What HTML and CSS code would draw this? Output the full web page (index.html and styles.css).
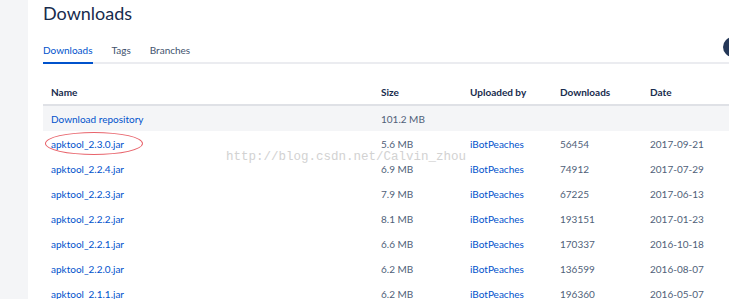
FILE: index.html
```html
<!DOCTYPE html>
<html lang="en">
<head>
	<meta charset="UTF-8">
	<title>Downloads</title>
	<link rel="stylesheet" href="styles.css">
</head>
<body>
	<div id="page">
		<div class="sidebar"></div>
		<div class="main">
			<h1>Downloads</h1>
			<ul class="tabs">
				<li class="active">Downloads</li>
				<li>Tags</li>
				<li>Branches</li>
			</ul>
			<table class="files">
				<colgroup>
					<col class="c-name">
					<col class="c-size">
					<col class="c-user">
					<col class="c-count">
					<col class="c-date">
				</colgroup>
				<thead>
					<tr>
						<th>Name</th>
						<th>Size</th>
						<th>Uploaded by</th>
						<th>Downloads</th>
						<th>Date</th>
					</tr>
				</thead>
				<tbody>
					<tr class="repo">
						<td><a href="#">Download repository</a></td>
						<td>101.2 MB</td>
						<td></td>
						<td></td>
						<td></td>
					</tr>
					<tr>
						<td><a href="#" class="marked">apktool_2.3.0.jar</a></td>
						<td>5.6 MB</td>
						<td><a href="#">iBotPeaches</a></td>
						<td>56454</td>
						<td>2017-09-21</td>
					</tr>
					<tr>
						<td><a href="#">apktool_2.2.4.jar</a></td>
						<td>6.9 MB</td>
						<td><a href="#">iBotPeaches</a></td>
						<td>74912</td>
						<td>2017-07-29</td>
					</tr>
					<tr>
						<td><a href="#">apktool_2.2.3.jar</a></td>
						<td>7.9 MB</td>
						<td><a href="#">iBotPeaches</a></td>
						<td>67225</td>
						<td>2017-06-13</td>
					</tr>
					<tr>
						<td><a href="#">apktool_2.2.2.jar</a></td>
						<td>8.1 MB</td>
						<td><a href="#">iBotPeaches</a></td>
						<td>193151</td>
						<td>2017-01-23</td>
					</tr>
					<tr>
						<td><a href="#">apktool_2.2.1.jar</a></td>
						<td>6.6 MB</td>
						<td><a href="#">iBotPeaches</a></td>
						<td>170337</td>
						<td>2016-10-18</td>
					</tr>
					<tr>
						<td><a href="#">apktool_2.2.0.jar</a></td>
						<td>6.2 MB</td>
						<td><a href="#">iBotPeaches</a></td>
						<td>136599</td>
						<td>2016-08-07</td>
					</tr>
					<tr>
						<td><a href="#">apktool_2.1.1.jar</a></td>
						<td>6.2 MB</td>
						<td><a href="#">iBotPeaches</a></td>
						<td>196360</td>
						<td>2016-05-07</td>
					</tr>
				</tbody>
			</table>
			<div class="avatar"></div>
			<div class="watermark">http://blog.csdn.net/Calvin_zhou</div>
		</div>
	</div>
</body>
</html>
```

FILE: styles.css
```css
body {
	margin: 0;
	font-family: Lato, "Liberation Sans", sans-serif;
	font-size: 10px;
	color: #505f79;
	background-color: #fff;
}

h1, ul, li {
	margin: 0;
	padding: 0;
}

ul {
	list-style: none;
}

a {
	color: #0052cc;
	text-decoration: none;
}

#page {
	display: flex;
	width: 729px;
	height: 299px;
	overflow: hidden;
}

.sidebar {
	width: 28px;
	flex-shrink: 0;
	background-color: #f4f5f7;
}

.main {
	position: relative;
	flex: 1;
	padding-left: 15px;
}

h1 {
	height: 30px;
	line-height: 27px;
	font-size: 18px;
	font-weight: 400;
	color: #172b4d;
}

.tabs {
	display: flex;
	gap: 19px;
	margin-top: 10px;
	border-bottom: 2px solid #ebecf0;
}

.tabs li {
	line-height: 20px;
	padding-bottom: 2px;
	margin-bottom: -2px;
	border-bottom: 2px solid transparent;
	color: #42526e;
}

.tabs .active {
	color: #0052cc;
	border-bottom-color: #0052cc;
}

.files {
	width: 686px;
	margin-top: 16px;
	border-collapse: collapse;
	table-layout: fixed;
}

.c-name { width: 330px; }
.c-size { width: 89px; }
.c-user { width: 90px; }
.c-count { width: 90px; }
.c-date { width: 87px; }

.files th {
	height: 24px;
	padding: 0 8px;
	text-align: left;
	font-weight: 700;
	color: #172b4d;
	border-bottom: 2px solid #dfe1e6;
}

.files td {
	height: 25px;
	padding: 0 8px;
	white-space: nowrap;
}

.files .repo td {
	background-color: #f4f5f7;
}

.marked {
	position: relative;
}

.marked::after {
	content: "";
	position: absolute;
	left: -6px;
	top: -6px;
	width: 96px;
	height: 21px;
	border: 1px solid #e8636b;
	border-radius: 50%;
}

.avatar {
	position: absolute;
	left: 695px;
	top: 37px;
	width: 20px;
	height: 20px;
	border-radius: 50%;
	background-color: #253858;
}

.watermark {
	position: absolute;
	left: 198px;
	top: 150px;
	font-family: "Liberation Mono", monospace;
	font-size: 12.5px;
	color: #d2d2d2;
	pointer-events: none;
}
```
